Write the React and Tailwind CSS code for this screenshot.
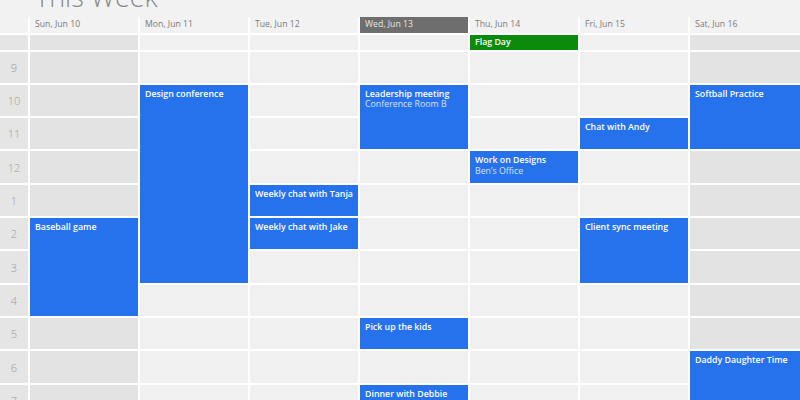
import React from "react";

const colStart = ["col-start-1", "col-start-2", "col-start-3", "col-start-4", "col-start-5", "col-start-6", "col-start-7", "col-start-8"];
const rowStart = ["row-start-1", "row-start-2", "row-start-3", "row-start-4", "row-start-5", "row-start-6", "row-start-7", "row-start-8", "row-start-9", "row-start-10", "row-start-11", "row-start-12", "row-start-13"];

const days = ["Sun, Jun 10", "Mon, Jun 11", "Tue, Jun 12", "Wed, Jun 13", "Thu, Jun 14", "Fri, Jun 15", "Sat, Jun 16"];
const hours = ["9", "10", "11", "12", "1", "2", "3", "4", "5", "6", "7"];

const events = [
  { title: "Design conference", cls: "col-start-3 row-start-4 row-span-6" },
  { title: "Baseball game", cls: "col-start-2 row-start-8 row-span-3" },
  { title: "Weekly chat with Tanja", cls: "col-start-4 row-start-7 row-span-1" },
  { title: "Weekly chat with Jake", cls: "col-start-4 row-start-8 row-span-1" },
  { title: "Leadership meeting", sub: "Conference Room B", cls: "col-start-5 row-start-4 row-span-2" },
  { title: "Pick up the kids", cls: "col-start-5 row-start-11 row-span-1" },
  { title: "Dinner with Debbie", cls: "col-start-5 row-start-13 row-span-1" },
  { title: "Work on Designs", sub: "Ben\u2019s Office", cls: "col-start-6 row-start-6 row-span-1" },
  { title: "Chat with Andy", cls: "col-start-7 row-start-5 row-span-1" },
  { title: "Client sync meeting", cls: "col-start-7 row-start-8 row-span-2" },
  { title: "Softball Practice", cls: "col-start-8 row-start-4 row-span-2" },
  { title: "Daddy Daughter Time", cls: "col-start-8 row-start-12 row-span-2" },
];

export default function App() {
  const cells = [];
  cells.push(<div key="h-time" className="col-start-1 row-start-1 bg-[#f2f2f2]" />);
  days.forEach((d, i) => {
    const today = i === 3;
    cells.push(
      <div
        key={"h" + i}
        className={`${colStart[i + 1]} row-start-1 flex items-center pl-[5px] text-[8.7px] leading-none ${today ? "bg-[#6e6e6e] text-[#e6e6e6]" : "bg-[#f2f2f2] text-[#7a7a7a]"}`}
      >
        {d}
      </div>
    );
  });
  for (let r = 1; r < 13; r++) {
    cells.push(
      <div key={"t" + r} className={`col-start-1 ${rowStart[r]} bg-[#e5e5e5] flex items-center justify-center text-[11px] font-light text-[#9a9a9a] leading-none`}>
        {r >= 2 ? hours[r - 2] : ""}
      </div>
    );
    for (let c = 0; c < 7; c++) {
      const weekend = c === 0 || c === 6;
      cells.push(
        <div key={"c" + r + "-" + c} className={`${colStart[c + 1]} ${rowStart[r]} ${weekend ? "bg-[#e3e3e3]" : "bg-[#f0f0f0]"}`} />
      );
    }
  }

  return (
    <div className="w-[800px] h-[400px] overflow-hidden bg-[#f2f2f2] font-['Open_Sans',sans-serif]">
      <div className="h-[17px] flex flex-col">
        <div className="pl-[35px] mt-[-17px] text-[27px] font-light leading-none text-[#8a8a8a] whitespace-nowrap">This Week</div>
      </div>
      <div className="grid grid-cols-[28px_repeat(6,108px)_1fr] grid-rows-[15.5px_15px_repeat(11,31.33px)] gap-[2px] bg-white">
        {cells}
        <div className="col-start-6 row-start-2 bg-[#0b8a0b] text-white font-semibold text-[8.8px] leading-none flex items-center pl-[5px]">
          Flag Day
        </div>
        {events.map((e) => (
          <div key={e.title} className={`${e.cls} bg-[#2672ec] text-white pl-[5px] pt-[4px] leading-[10.5px]`}>
            <div className="font-semibold text-[8.8px]">{e.title}</div>
            {e.sub && <div className="text-[8.8px] text-[#d6e3fa]">{e.sub}</div>}
          </div>
        ))}
      </div>
    </div>
  );
}
